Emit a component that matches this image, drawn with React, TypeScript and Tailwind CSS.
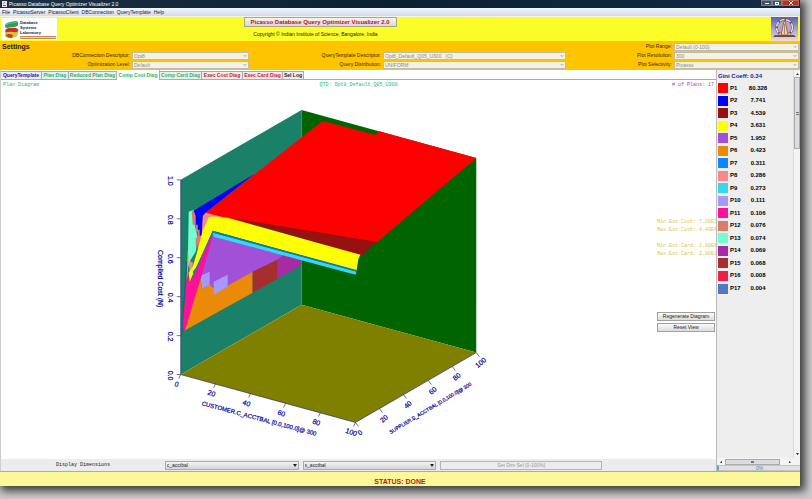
import React from 'react';
import { ChevronDown } from 'lucide-react';

interface Plan {
  name: string;
  value: string;
  swatch: string;
}

const plans: Plan[] = [
  { name: 'P1', value: '80.328', swatch: 'bg-[#ff0000]' },
  { name: 'P2', value: '7.741', swatch: 'bg-[#0000ff]' },
  { name: 'P3', value: '4.539', swatch: 'bg-[#961212]' },
  { name: 'P4', value: '3.631', swatch: 'bg-[#ffff00]' },
  { name: 'P5', value: '1.952', swatch: 'bg-[#a350d8]' },
  { name: 'P6', value: '0.423', swatch: 'bg-[#eb8a08]' },
  { name: 'P7', value: '0.311', swatch: 'bg-[#0c88ff]' },
  { name: 'P8', value: '0.286', swatch: 'bg-[#f58a8a]' },
  { name: 'P9', value: '0.273', swatch: 'bg-[#35d8ec]' },
  { name: 'P10', value: '0.111', swatch: 'bg-[#a898fa]' },
  { name: 'P11', value: '0.106', swatch: 'bg-[#ff1098]' },
  { name: 'P12', value: '0.076', swatch: 'bg-[#d97c68]' },
  { name: 'P13', value: '0.074', swatch: 'bg-[#74fcd2]' },
  { name: 'P14', value: '0.069', swatch: 'bg-[#a62ca6]' },
  { name: 'P15', value: '0.068', swatch: 'bg-[#a62e2e]' },
  { name: 'P16', value: '0.008', swatch: 'bg-[#f02045]' },
  { name: 'P17', value: '0.004', swatch: 'bg-[#5078c4]' },
];

const tabs = [
  { label: 'QueryTemplate', style: 'w-[41px] text-[#1818b0]' },
  { label: 'Plan Diag', style: 'w-[27px] text-[#28b868]' },
  { label: 'Reduced Plan Diag', style: 'w-[48px] text-[#28b868]' },
  { label: 'Comp Cost Diag', style: 'w-[43px] text-[#28b868]', active: true },
  { label: 'Comp Card Diag', style: 'w-[42px] text-[#28b868]' },
  { label: 'Exec Cost Diag', style: 'w-[41px] text-[#d01818]' },
  { label: 'Exec Card Diag', style: 'w-[40px] text-[#d01818]' },
  { label: 'Sel Log', style: 'w-[21px] text-[#401818]' },
];

const mono = "font-['Liberation_Mono',monospace]";

const Setting: React.FC<{ id: string; label: string; value: string; place: string }> = ({ id, label, value, place }) => (
  <>
    <label htmlFor={id} className={`${place} pr-[2px] text-right text-[#3a2800]`}>{label}</label>
    <div className="relative mr-px h-[8px]">
      <select
        id={id}
        disabled
        className="block h-[8px] w-full appearance-none border border-[#c4bd9c] bg-[#f3f1e8] px-px text-[5px] leading-[6px] text-[#8a8a8a]"
      >
        <option>{value}</option>
      </select>
      <ChevronDown className="pointer-events-none absolute top-[2px] right-[2px] size-[4px] text-[#777]" strokeWidth={4} />
    </div>
  </>
);

const DimensionSelect: React.FC<{ label: string; value: string }> = ({ label, value }) => (
  <div className="relative">
    <select
      aria-label={label}
      className="block h-[9px] w-full appearance-none border border-[#aaa] bg-linear-to-b from-[#f4f4f4] to-[#d4d4d4] px-px text-[5px] leading-[7px] text-[#222]"
    >
      <option>{value}</option>
    </select>
    <svg viewBox="0 0 4 3" className="pointer-events-none absolute top-[3px] right-[2px] w-[4px]">
      <path d="M0 0H4L2 3Z" fill="#222" />
    </svg>
  </div>
);

const LabLogo = () => (
  <div className="flex h-[22px] w-[56px] items-center gap-px bg-white pl-[3px]">
    <svg viewBox="0 0 15 19" className="h-[19px] w-[15px] shrink-0">
      <path d="M1 6Q1 3 6 2L12 1Q14 1 14 3V5Q13 7 8 7L3 8Q1 8 1 6Z" fill="#2f9e58" />
      <path d="M2 5Q4 3 8 3L13 2" stroke="#5cc283" fill="none" />
      <path d="M2 9Q6 7 12 8Q15 9 14 12Q12 14 8 13L3 13Q0 12 2 9Z" fill="#c92f22" />
      <path d="M1 13Q5 11 9 12Q12 13 14 11V14Q13 18 7 18Q2 18 1 16Z" fill="#dcc62c" />
      <path d="M2 15Q5 13 9 15L8 18Q3 18 2 15Z" fill="#c93b22" />
    </svg>
    <div className="text-[4px] leading-[5px] font-bold text-[#222]">
      <p>Database</p>
      <p>Systems</p>
      <p>Laboratory</p>
      <div className="mt-px h-[3px] w-[36px] border-y border-[#c98458] bg-[#eed7c4]" />
    </div>
  </div>
);

const Emblem = () => (
  <svg viewBox="0 0 27 24" className="h-[24px] w-[27px]">
    <defs>
      <linearGradient id="sky" x2="0" y2="1">
        <stop offset="0" stopColor="#5660c4" />
        <stop offset="0.6" stopColor="#b2aede" />
        <stop offset="1" stopColor="#ecdcd8" />
      </linearGradient>
    </defs>
    <rect width="27" height="24" fill="url(#sky)" />
    <circle cx="13.5" cy="10.5" r="8" fill="#b4a6d4" stroke="#7a4c38" strokeWidth="2.5" />
    <circle cx="13.5" cy="10.5" r="8" fill="none" stroke="#eadfca" strokeWidth="1.5" strokeDasharray="5 1.5" />
    <path d="M10 18L13 4H14L17 18Z" fill="#efd3a5" stroke="#85543c" strokeWidth="0.8" />
    <path d="M13.5 7V17" stroke="#85543c" strokeWidth="0.6" />
    <path d="M4 18H23L25 20H2Z" fill="#744a40" />
  </svg>
);

const xTicks = [
  { label: '0', x: 180, y: 375 },
  { label: '20', x: 215, y: 384 },
  { label: '40', x: 250, y: 394 },
  { label: '60', x: 285, y: 404 },
  { label: '80', x: 320, y: 413 },
  { label: '100', x: 355, y: 423 },
];

const yTicks = [
  { label: '0', x: 355, y: 423 },
  { label: '20', x: 379, y: 409 },
  { label: '40', x: 403, y: 395 },
  { label: '60', x: 428, y: 381 },
  { label: '80', x: 452, y: 367 },
  { label: '100', x: 476, y: 353 },
];

const costTicks = ['1.0', '0.8', '0.6', '0.4', '0.2', '0.0'];

const CostDiagram = () => (
  <svg viewBox="0 90 656 370" className="block h-auto min-w-0 flex-1" role="img" aria-label="Compilation cost diagram">
    {/* walls and floor of the box */}
    <path d="M180 180L301 110V305L180 375Z" fill="#1a8068" />
    <path d="M301 110L476 158V353L301 305Z" fill="#006400" />
    <path d="M180 375L301 305L476 353L355 423Z" fill="#808000" />

    {/* lower plans on the near side */}
    <path d="M211 235L290 252L284 256L227 286L209 287L199 283Z" fill="#a350d8" />
    <path d="M199 274L201 289L209 285L213 288L227 286L252 272V293L184 331Z" fill="#eb8a08" />
    <path d="M252 272L277 260V279L252 293Z" fill="#a62e2e" />
    <path d="M277 260L284 254L301 261V265L277 279Z" fill="#a62ca6" />
    <path d="M200 276L209 272V285L201 289Z" fill="#a898fa" />
    <path d="M213 282L227 275V287L213 295Z" fill="#a898fa" />
    <path d="M187 268L189 283L193 276L211 233L212 237L201 275L184 332L182 325Z" fill="#ff1098" />
    <path d="M181 335L186 262" stroke="#1a5088" strokeWidth="0.7" fill="none" />

    {/* left edge strips */}
    <path d="M188 212L193 210L193 221L195 229L197 238L195 252L190 260L187 268Z" fill="#74fcd2" />
    <path d="M187 250L188 258L187 275L186 280Z" fill="#d8b040" />
    <path d="M191 211H194L196 221H198V226H200L202 218L204 212L215 214L234 220L209 222L202 232L200 244L199 251H197V246H195V238H197V232H195V225H192Z" fill="#d97c68" />
    <path d="M202 214L205 212L240 220L208 218L206 226H204L203 234L201 236Z" fill="#f58a8a" />
    <path d="M193 211L254 174L206 212L202 216L201 236H199V230H197V225H195V216Z" fill="#0000ff" />
    <path d="M188 262H192V269L189 272Z" fill="#f58a8a" />

    {/* cost surface */}
    <path d="M205 213L322 121L375 135L378 131L476 158L376 243L245 223Z" fill="#ff0000" />
    <path d="M230 218L376 242L361 256Z" fill="#961212" />
    <path d="M208 218Q211 216 217 217L227 218L360 255L358 259L356 271L212 231L204 249L192 275L189 282L188 273L192 267L197 250L202 231Z" fill="#ffff00" />
    <path d="M212 231L356 271V273L212 234L193 276L192 272L196 267L204 249Z" fill="#1478c0" />
    <path d="M212 233L356 272L355 275L213 237Z" fill="#35d8ec" />
    <path d="M212 232L356 271" stroke="#1478b8" strokeWidth="1.5" />

    {/* axes */}
    <g stroke="#303070" strokeWidth="0.7">
      <path d="M180 180V375L355 423L476 353" fill="none" />
      {costTicks.map((label, i) => (
        <line key={label} x1="176" x2="180" y1={180 + i * 39} y2={180 + i * 39} />
      ))}
      {xTicks.map((t) => (
        <line key={t.label} x1={t.x} y1={t.y} x2={t.x - 2} y2={t.y + 4} />
      ))}
      {yTicks.map((t) => (
        <line key={t.label} x1={t.x} y1={t.y} x2={t.x + 3} y2={t.y + 4} />
      ))}
    </g>
    <g fill="#0000a0" stroke="#0000a0" strokeWidth="0.2" textAnchor="middle" className="font-['Liberation_Sans',Arial,sans-serif] text-[7px]">
      {costTicks.map((label, i) => (
        <text key={label} transform={`translate(167 ${181 + i * 39}) rotate(90)`}>{label}</text>
      ))}
      {xTicks.map((t) => (
        <text key={t.label} transform={`translate(${t.x - 5} ${t.y + 12}) rotate(20)`}>{t.label}</text>
      ))}
      {yTicks.map((t) => (
        <text key={t.label} transform={`translate(${t.x + 6} ${t.y + 12}) rotate(-40)`}>{t.label}</text>
      ))}
      <text transform="translate(157 279) rotate(90)">Compiled Cost (N)</text>
      <text transform="translate(258 421) rotate(15)" className="text-[6px]">CUSTOMER.C_ACCTBAL [0.0,100.0]@ 300</text>
      <text transform="translate(431 410) rotate(-31)" className="text-[5px]">SUPPLIER.S_ACCTBAL [0.0,100.0]@ 300</text>
    </g>
  </svg>
);

const actionButton =
  'block h-[9px] w-full border border-[#a0a0a0] bg-linear-to-b from-[#fafafa] to-[#dcdcdc] text-center leading-[7px] text-[#222]';

const Sidebar = () => (
  <aside className="flex w-[84px] shrink-0 flex-col border-l border-[#bbb] bg-[#eeeeee]">
    <div className="flex flex-1">
      <div className="flex-1 pt-[3px] pl-px text-[6px] leading-[7px] font-bold text-black">
        <h2 className="text-[#1818a8]">Gini Coeff: 0.34</h2>
        <table className="mt-[2px] h-[213px]">
          <tbody>
            {plans.map((p) => (
              <tr key={p.name}>
                <td className="w-[12px] p-0">
                  <div className={`size-[10px] ${p.swatch}`} />
                </td>
                <td className="w-[18px] p-0">{p.name}</td>
                <td className="w-[20px] p-0 text-center">{p.value}</td>
              </tr>
            ))}
          </tbody>
        </table>
      </div>
      <div className="flex w-[7px] flex-col items-center border-l border-[#ddd] bg-[#f4f4f4] py-[2px]">
        <svg viewBox="0 0 4 3" className="my-px w-[3px]"><path d="M0 3H4L2 0Z" fill="#333" /></svg>
        <div className="mt-px flex h-[72px] w-[6px] flex-col items-center justify-center gap-px border border-[#aaa] bg-[#dcdce0]">
          <div className="h-px w-[3px] bg-[#777]" />
          <div className="h-px w-[3px] bg-[#777]" />
        </div>
        <svg viewBox="0 0 4 3" className="mt-auto mb-px w-[3px]"><path d="M0 0H4L2 3Z" fill="#333" /></svg>
      </div>
    </div>
    <div className="flex h-[7px] items-center bg-[#f4f4f4] pl-[3px]">
      <svg viewBox="0 0 3 4" className="w-[2px]"><path d="M3 0V4L0 2Z" fill="#333" /></svg>
      <div className="ml-[3px] flex h-[6px] w-[55px] items-center justify-center border border-[#aaa] bg-[#dcdce0]">
        <div className="h-[2px] w-[3px] bg-[#777]" />
      </div>
      <svg viewBox="0 0 3 4" className="ml-[9px] w-[2px]"><path d="M0 0V4L3 2Z" fill="#333" /></svg>
    </div>
    <div className="h-[6px] border-y border-l-2 border-y-[#c4c4c4] border-l-[#58a8e8] bg-[#e0e0e0] text-center text-[5px] leading-[4px] text-[#3c8cd8]">
      0%
    </div>
  </aside>
);

const App: React.FC = () => (
  <div className="min-h-screen overflow-hidden bg-[#cacaca] pr-3 pb-3 font-['Liberation_Sans',Arial,sans-serif] text-[5px] leading-[7px] text-[#222]">
    <div className="bg-white shadow-[3px_3px_8px_2px_rgba(0,0,0,0.7)]">
      <header>
        <div className="flex h-[8px] items-center bg-linear-to-r from-[#1c3044] via-[#0c2034] to-[#102c44] pl-[2px] text-white">
          <svg viewBox="0 0 5 6" className="mr-[2px] h-[6px] w-[5px]">
            <rect width="5" height="6" fill="#e8e8e8" />
            <path d="M2 3Q1 2 3 1" stroke="#d84020" strokeWidth="0.7" fill="none" />
            <path d="M1 4H4V5H1Z" fill="#4878a8" />
          </svg>
          <h1>Picasso Database Query Optimizer Visualizer 2.0</h1>
          <div className="ml-auto flex h-[6px] self-start pr-px">
            <button aria-label="Minimize" className="flex w-[11px] items-center justify-center border border-[#77828e] bg-[#43505e]">
              <span className="h-px w-[4px] bg-white" />
            </button>
            <button aria-label="Restore" className="flex w-[10px] items-center justify-center border border-[#77828e] bg-[#43505e]">
              <span className="h-[3px] w-[4px] border border-white" />
            </button>
            <button aria-label="Close" className="flex w-[17px] items-center justify-center border border-[#b86a58] bg-[#b83020]">
              <svg viewBox="0 0 4 4" className="size-[4px]"><path d="M0 0L4 4M4 0L0 4" stroke="#fff" /></svg>
            </button>
          </div>
        </div>

        <nav className="flex h-[9px] items-center gap-[3px] border-b border-[#f4f4e0] bg-linear-to-b from-[#f4f6fb] to-[#d2daec] pl-[2px]">
          {['File', 'PicassoServer', 'PicassoClient', 'DBConnection', 'QueryTemplate', 'Help'].map((item) => (
            <button key={item}>{item}</button>
          ))}
        </nav>

        <div className="grid h-[24px] grid-cols-[1fr_auto_1fr] items-center bg-[#fcfc28]">
          <div className="pl-px"><LabLogo /></div>
          <div className="mr-[160px] self-start text-center">
            <button className="block h-[10px] w-[153px] border border-[#aaa878] bg-linear-to-b from-[#f4f4f4] to-[#d8d8d8] text-[6px] leading-[8px] font-bold text-[#c01020]">
              Picasso Database Query Optimizer Visualizer 2.0
            </button>
            <p className="mt-[4px] pr-[9px]">Copyright © Indian Institute of Science, Bangalore, India</p>
          </div>
          <div className="flex justify-end pr-[2px]"><Emblem /></div>
        </div>

        <div className="grid grid-cols-[132fr_118fr_133fr_184fr_107fr_126fr] grid-rows-[9px_9px_9px] items-center bg-[#ffc400] py-px">
          <h2 className="col-span-4 pl-[2px] text-[7px] font-bold text-[#221800]">Settings</h2>
          <Setting id="range" label="Plot Range:" value="Default (0-100)" place="col-start-5" />
          <Setting id="connection" label="DBConnection Descriptor:" value="Opt8" place="col-start-1" />
          <Setting id="template" label="QueryTemplate Descriptor:" value={'Opt8_Default_Q05_U300\u00a0\u00a0\u00a0(C)'} place="col-start-3" />
          <Setting id="resolution" label="Plot Resolution:" value="300" place="col-start-5" />
          <Setting id="level" label="Optimization Level:" value="Default" place="col-start-1" />
          <Setting id="distribution" label="Query Distribution:" value="UNIFORM" place="col-start-3" />
          <Setting id="selectivity" label="Plot Selectivity:" value="Picasso" place="col-start-5" />
        </div>
      </header>

      <div className="flex">
        <main className="flex min-w-0 flex-1 flex-col border-l border-[#ccc]">
          <div role="tablist" className="flex h-[10px] items-end border-b border-[#aaa]">
            {tabs.map((tab) => (
              <button
                key={tab.label}
                role="tab"
                aria-selected={!!tab.active}
                className={`shrink-0 border-r border-[#aaa] text-center font-bold whitespace-nowrap ${tab.style} ${
                  tab.active ? '-mb-px h-[10px] bg-white' : 'h-[8px] border-t bg-[#eeeeee]'
                }`}
              >
                {tab.label}
              </button>
            ))}
          </div>

          <div className={`grid h-[10px] grid-cols-3 items-center px-[2px] ${mono}`}>
            <span className="text-[#28b868]">Plan Diagram</span>
            <span className="text-center text-[#28b868]">QTD: Opt8_Default_Q05_U300</span>
            <span className="text-right text-[#c030c0]"># of Plans: 17</span>
          </div>

          <div className="flex">
            <CostDiagram />
            <div className="w-[60px] shrink-0 overflow-hidden pt-[128px] pl-px">
              <div className={`leading-[8px] whitespace-nowrap text-[#e2c440] ${mono}`}>
                <p>Min Est Cost: 7.09E3</p>
                <p>Max Est Cost: 4.49E4</p>
                <p className="mt-[8px]">Min Est Card: 1.00E0</p>
                <p>Max Est Card: 2.90E1</p>
              </div>
              <div className="mt-[54px] space-y-[2px] pr-px">
                <button className={actionButton}>Regenerate Diagram</button>
                <button className={actionButton}>Reset View</button>
              </div>
            </div>
          </div>

          <div className="grid h-[12px] grid-cols-[160fr_134fr_134fr_162fr_110fr] items-center gap-x-[4px] bg-[#ececec]">
            <span className={`pl-[55px] ${mono}`}>Display Dimensions</span>
            <DimensionSelect label="First dimension" value="c_acctbal" />
            <DimensionSelect label="Second dimension" value="s_acctbal" />
            <button disabled className="h-[9px] border border-[#b4b4b4] leading-[7px] text-[#999]">Set Dim Sel [0-100%]</button>
          </div>
        </main>
        <Sidebar />
      </div>

      <footer className="flex h-[15px] items-center justify-center border-t border-[#aaa] bg-[#faf898] pt-[4px] text-[7px] font-bold text-[#c01808]">
        STATUS: DONE
      </footer>
    </div>
  </div>
);

export default App;
